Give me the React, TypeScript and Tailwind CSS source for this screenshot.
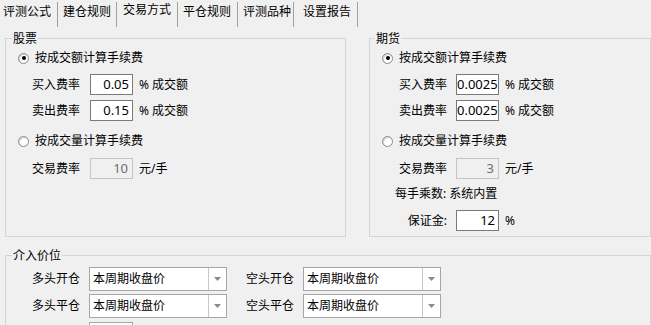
import React from "react";

const tabs = [
  { text: "评测公式", cls: "w-[58px] pl-[3px] pt-[2px]" },
  { text: "建仓规则", cls: "w-[59px] pl-[5px] pt-[2px]" },
  { text: "交易方式", cls: "w-[61px] pl-[6px] pt-0" },
  { text: "平仓规则", cls: "w-[60px] pl-[5px] pt-[2px]" },
  { text: "评测品种", cls: "w-[56px] pl-[5px] pt-[2px]" },
  { text: "设置报告", cls: "w-[64px] pl-[9px] pt-[2px]" },
];

const Radio = ({ checked }: { checked?: boolean }) => (
  <span className="w-[11px] h-[11px] rounded-full border border-[#8a8a8a] bg-white flex items-center justify-center shadow-[inset_1px_1px_1px_rgba(0,0,0,0.18)]">
    {checked && <span className="w-[4px] h-[4px] rounded-full bg-black" />}
  </span>
);

const RadioRow = ({ checked, label, className }: { checked?: boolean; label: string; className: string }) => (
  <div className={`flex items-center h-[16px] pl-[12px] gap-[6px] ${className}`}>
    <Radio checked={checked} />
    <span>{label}</span>
  </div>
);

const Box = ({ value, disabled }: { value: string; disabled?: boolean }) => (
  <div
    className={
      disabled
        ? "w-[43px] h-[21px] border border-[#c4c4c4] bg-[#f0f0f0] text-[#6d6d6d] text-right pr-[4px] leading-[19px] text-[13px]"
        : "w-[43px] h-[21px] border border-[#7a7a7a] bg-white text-right pr-[3px] leading-[19px] text-[13px]"
    }
  >
    {value}
  </div>
);

const Field = ({
  label,
  value,
  unit,
  disabled,
  labelCls,
  className,
}: {
  label: string;
  value: string;
  unit: string;
  disabled?: boolean;
  labelCls: string;
  className: string;
}) => (
  <div className={`flex items-center h-[21px] ${className}`}>
    <span className={`text-right ${labelCls}`}>{label}</span>
    <Box value={value} disabled={disabled} />
    <span className="ml-[6px]">{unit}</span>
  </div>
);

const Select = () => (
  <div className="w-[138px] h-[24px] border border-[#a6a6a6] bg-white flex">
    <span className="flex-1 pl-[3px] leading-[22px]">本周期收盘价</span>
    <span className="w-[18px] border-l border-[#c8c8c8] flex items-center justify-center">
      <svg width="7" height="4" viewBox="0 0 7 4">
        <path d="M0 0h7L3.5 4z" fill="#8a8a8a" />
      </svg>
    </span>
  </div>
);

export default function App() {
  return (
    <div className="w-[651px] h-[325px] overflow-hidden bg-[#f0f0f0] text-black text-[12px] leading-[16px] font-['Noto_Sans','Noto_Sans_CJK_SC',sans-serif]">
      {/* tab strip */}
      <div className="flex h-[27px]">
        {tabs.map((t) => (
          <div key={t.text} className={`h-[25px] mt-[2px] border-r border-[#a0a0a0] ${t.cls}`}>
            {t.text}
          </div>
        ))}
      </div>

      <div className="flex pl-[5px] gap-[23px] mt-[3px]">
        {/* 股票 */}
        <fieldset className="w-[341px] h-[207px] border border-[#d5d5d5]">
          <legend className="ml-[6px] px-[1px] leading-[17px]">股票</legend>
          <RadioRow checked label="按成交额计算手续费" className="mt-[3px]" />
          <Field label="买入费率" value="0.05" unit="% 成交额" labelCls="w-[74px] mr-[10px]" className="mt-[8px]" />
          <Field label="卖出费率" value="0.15" unit="% 成交额" labelCls="w-[74px] mr-[10px]" className="mt-[5px]" />
          <RadioRow label="按成交量计算手续费" className="mt-[12px]" />
          <Field label="交易费率" value="10" unit="元/手" disabled labelCls="w-[74px] mr-[10px]" className="mt-[9px]" />
        </fieldset>

        {/* 期货 */}
        <fieldset className="w-[282px] h-[207px] border border-[#d5d5d5]">
          <legend className="ml-[5px] px-[1px] leading-[17px]">期货</legend>
          <RadioRow checked label="按成交额计算手续费" className="mt-[3px]" />
          <Field label="买入费率" value="0.0025" unit="% 成交额" labelCls="w-[77px] mr-[9px]" className="mt-[8px]" />
          <Field label="卖出费率" value="0.0025" unit="% 成交额" labelCls="w-[77px] mr-[9px]" className="mt-[5px]" />
          <RadioRow label="按成交量计算手续费" className="mt-[12px]" />
          <Field label="交易费率" value="3" unit="元/手" disabled labelCls="w-[77px] mr-[9px]" className="mt-[9px]" />
          <div className="h-[16px] pl-[25px] mt-[7px]">每手乘数: 系统内置</div>
          <Field label="保证金:" value="12" unit="%" labelCls="w-[77px] mr-[9px]" className="mt-[8px]" />
        </fieldset>
      </div>

      {/* 介入价位 */}
      <fieldset className="ml-[5px] w-[646px] mt-[10px] h-[90px] border border-[#d5d5d5]">
        <legend className="ml-[6px] px-[1px] leading-[17px]">介入价位</legend>
        <div className="flex items-center mt-[3px]">
          <span className="w-[74px] mr-[9px] text-right">多头开仓</span>
          <Select />
          <span className="ml-[19px] mr-[9px]">空头开仓</span>
          <Select />
        </div>
        <div className="flex items-center mt-[3px]">
          <span className="w-[74px] mr-[9px] text-right">多头平仓</span>
          <Select />
          <span className="ml-[19px] mr-[9px]">空头平仓</span>
          <Select />
        </div>
        <div className="flex mt-[4px] pl-[83px]">
          <div className="w-[44px] h-[21px] border border-[#a6a6a6] bg-white" />
        </div>
      </fieldset>
    </div>
  );
}
